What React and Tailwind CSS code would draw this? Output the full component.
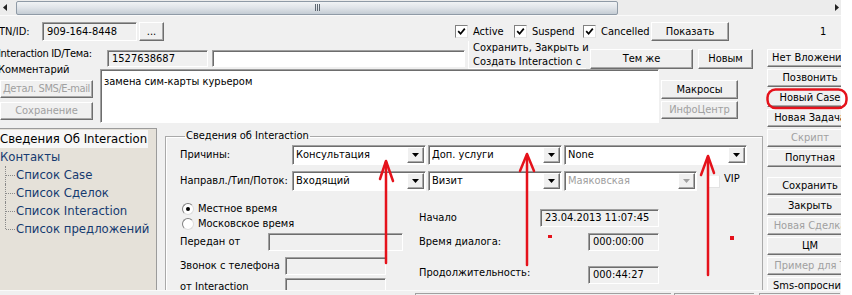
import React from "react";

const btn =
  "flex items-center justify-center bg-[#f0f0f0] border border-t-white border-l-white border-r-[#6e6e6e] border-b-[#6e6e6e] shadow-[inset_-1px_-1px_0_#a9a9a9] whitespace-nowrap overflow-hidden shrink-0";
const sunken =
  "border border-t-[#a0a0a0] border-l-[#a0a0a0] border-r-white border-b-white shadow-[inset_1px_1px_0_#6d6d6d]";

const Tick = () => (
  <svg width="9" height="9" viewBox="0 0 9 9">
    <path d="M1.2 4.2 L3.6 6.8 L7.8 1.6" stroke="#000" strokeWidth="1.7" fill="none" />
  </svg>
);

const CheckItem = ({ label, className }) => (
  <div className={`flex items-center ${className}`}>
    <span className="w-[13px] h-[13px] bg-white border border-t-[#808080] border-l-[#808080] border-r-[#e3e3e3] border-b-[#e3e3e3] flex items-center justify-center">
      <Tick />
    </span>
    <span className="ml-[5px]">{label}</span>
  </div>
);

const Arrow = ({ disabled }) => (
  <svg width="7" height="4" viewBox="0 0 7 4">
    <polygon points="0,0 7,0 3.5,4" fill={disabled ? "#a0a0a0" : "#000"} />
  </svg>
);

const Combo = ({ text, className, disabled }) => (
  <div className={`${sunken} bg-white h-[20px] flex items-stretch ${className}`}>
    <div className={`flex-1 flex items-center pl-[3px] whitespace-nowrap overflow-hidden ${disabled ? "text-[#a0a0a0]" : ""}`}>
      {text}
    </div>
    <div className={`${btn} w-[17px] my-[1px] mr-[1px]`}>
      <Arrow disabled={disabled} />
    </div>
  </div>
);

const Radio = ({ checked, label }) => (
  <div className="h-[15px] flex items-center">
    <span className="ml-[2px] w-[12px] h-[12px] rounded-full bg-white border border-t-[#808080] border-l-[#808080] border-r-[#dcdcdc] border-b-[#dcdcdc] flex items-center justify-center">
      {checked && <span className="w-[4px] h-[4px] rounded-full bg-black" />}
    </span>
    <span className="ml-[4px]">{label}</span>
  </div>
);

const TreeChild = ({ text, last }) => (
  <div className="h-[18px] flex items-center">
    <div className="w-[5px]" />
    <div className={`w-[10px] self-start border-l border-dotted border-[#8a8a8a] ${last ? "h-[9px]" : "h-[18px]"}`}>
      <div className="mt-[9px] border-t border-dotted border-[#8a8a8a]" />
    </div>
    <span className="ml-[1px] whitespace-nowrap">{text}</span>
  </div>
);

export default function App() {
  return (
    <div className="relative w-[852px] h-[295px] overflow-hidden bg-white text-[11px] leading-[14px] text-black font-['DejaVu_Sans_Condensed','DejaVu_Sans',sans-serif]">
      <div className="flex h-full">
        <div className="w-[841px] h-full flex flex-col bg-[#f0f0f0]">
          {/* horizontal scrollbar */}
          <div className="h-[16px] shrink-0 flex items-center bg-[#ececec] border-b border-[#fafafa]">
            <div className="w-[16px] h-full flex items-center pl-[3px]">
              <svg width="4" height="7" viewBox="0 0 4 7">
                <polygon points="4,0 4,7 0,3.5" fill="#222" />
              </svg>
            </div>
            <div className="w-[602px] h-[14px] rounded-[2px] border border-[#8f9aa6] bg-linear-to-b from-[#f1f3f5] via-[#dfe3e8] to-[#c4ccd4] flex items-center justify-center gap-[1px]">
              <span className="w-[1px] h-[7px] bg-[#5d6670]" />
              <span className="w-[1px] h-[7px] bg-[#5d6670]" />
              <span className="w-[1px] h-[7px] bg-[#5d6670]" />
            </div>
            <div className="flex-1" />
            <div className="w-[6px] flex items-center">
              <svg width="4" height="7" viewBox="0 0 4 7">
                <polygon points="0,0 0,7 4,3.5" fill="#222" />
              </svg>
            </div>
          </div>

          <div className="flex h-[274px] shrink-0">
            {/* main form */}
            <div className="w-[765px] flex flex-col">
              <div className="mt-[6px] h-[19px] shrink-0 flex items-center">
                <span className="-ml-[1px] w-[43px]">TN/ID:</span>
                <div className={`${sunken} bg-[#f0f0f0] w-[95px] h-[19px] flex items-center pl-[4px]`}>909-164-8448</div>
                <div className={`${btn} ml-[2px] w-[25px] h-[19px]`}>...</div>
                <div className="ml-[291px] flex items-center">
                  <CheckItem label="Active" className="w-[59px]" />
                  <CheckItem label="Suspend" className="w-[69px]" />
                  <CheckItem label="Cancelled" className="w-[68px]" />
                </div>
                <div className={`${btn} w-[78px] h-[19px]`}>Показать</div>
              </div>

              <div className="flex h-[83px] shrink-0">
                <div className="w-[100px] flex flex-col">
                  <span className="-ml-[2px] mt-[6px] h-[14px] whitespace-nowrap tracking-[-0.3px]">Interaction ID/Тема:</span>
                  <span className="-ml-[2px] mt-[2px] h-[14px]">Комментарий</span>
                  <div className={`${btn} mt-[3px] w-[93px] h-[18px] text-[#a0a0a0] tracking-[-0.4px]`}>Детал. SMS/E-mail</div>
                  <div className={`${btn} mt-[4px] w-[93px] h-[18px] text-[#a0a0a0]`}>Сохранение</div>
                </div>
                <div className="w-[665px] flex flex-col">
                  <div className="h-[28px] shrink-0 flex items-start">
                    <div className={`${sunken} bg-[#f0f0f0] ml-[7px] mt-[9px] w-[101px] h-[17px] flex items-center pl-[4px]`}>1527638687</div>
                    <div className={`${sunken} bg-white ml-[4px] mt-[9px] w-[253px] h-[17px]`} />
                    <div className="ml-[3px] w-[118px] h-[28px] pl-[4px] border-l border-b border-white whitespace-nowrap">
                      <div>Сохранить, Закрыть и</div>
                      <div>Создать Interaction с</div>
                    </div>
                    <div className={`${btn} ml-[4px] mt-[8px] w-[103px] h-[20px]`}>Тем же</div>
                    <div className={`${btn} ml-[5px] mt-[8px] w-[55px] h-[20px]`}>Новым</div>
                  </div>
                  <div className="flex h-[55px] shrink-0">
                    <div className={`${sunken} bg-white w-[559px] h-[54px] pl-[3px] pt-[5px]`}>замена сим-карты курьером</div>
                    <div className="ml-[2px] flex flex-col">
                      <div className={`${btn} mt-[11px] w-[77px] h-[19px]`}>Макросы</div>
                      <div className={`${btn} mt-[2px] w-[77px] h-[18px] text-[#a0a0a0]`}>ИнфоЦентр</div>
                    </div>
                  </div>
                </div>
              </div>

              <div className="flex h-[166px] shrink-0">
                {/* tree */}
                <div className="mt-[4px] w-[157px] h-[162px] bg-[#e5e1d9] border-t border-r border-[#9b9b9b] text-[13px] leading-[18px] text-[#163a70] overflow-hidden">
                  <div className="mt-[1px] w-[148px] h-[18px] bg-[#f7f7f7] text-black whitespace-nowrap">Сведения Об Interaction</div>
                  <div className="h-[18px]">Контакты</div>
                  <TreeChild text="Список Case" />
                  <TreeChild text="Список Сделок" />
                  <TreeChild text="Список Interaction" />
                  <TreeChild text="Список предложений" last />
                </div>

                {/* group box */}
                <fieldset className="ml-[8px] mt-[5px] w-[598px] h-[175px] border border-[#a9a9a9] shadow-[inset_1px_1px_0_white] pl-[14px]">
                  <legend className="ml-[5px] px-[1px] leading-[14px]">Сведения об Interaction</legend>
                  <div className="mt-[2px] h-[20px] flex items-center">
                    <span className="w-[112px]">Причины:</span>
                    <Combo text="Консультация" className="w-[134px]" />
                    <Combo text="Доп. услуги" className="ml-[2px] w-[134px]" />
                    <Combo text="None" className="ml-[2px] w-[183px]" />
                  </div>
                  <div className="mt-[6px] h-[20px] flex items-center">
                    <span className="w-[112px] whitespace-nowrap">Направл./Тип/Поток:</span>
                    <Combo text="Входящий" className="w-[134px]" />
                    <Combo text="Визит" className="ml-[2px] w-[134px]" />
                    <Combo text="Маяковская" className="ml-[2px] w-[133px]" disabled />
                    <span className="ml-[11px] w-[12px] h-[13px] bg-white border border-t-[#f0f0f0] border-l-[#f0f0f0] border-r-[#e3e3e3] border-b-[#e3e3e3]" />
                    <span className="ml-[4px] mb-[4px]">VIP</span>
                  </div>
                  <div className="flex">
                    <div className="w-[239px] flex flex-col">
                      <div className="mt-[10px]">
                        <Radio checked label="Местное время" />
                        <Radio label="Московское время" />
                      </div>
                      <div className="mt-[2px] h-[18px] flex items-center">
                        <span className="w-[88px]">Передан от</span>
                        <div className={`${sunken} bg-[#f0f0f0] w-[135px] h-[18px]`} />
                      </div>
                      <div className="mt-[6px] h-[18px] flex items-center">
                        <span className="w-[105px] whitespace-nowrap">Звонок с телефона</span>
                        <div className={`${sunken} bg-[#f0f0f0] w-[101px] h-[18px]`} />
                      </div>
                      <div className="mt-[3px] h-[18px] flex items-center">
                        <span className="w-[105px] whitespace-nowrap">от Interaction</span>
                        <div className={`${sunken} bg-[#f0f0f0] w-[101px] h-[18px]`} />
                      </div>
                    </div>
                    <div className="flex flex-col">
                      <div className="mt-[18px] h-[18px] flex items-center">
                        <span className="w-[121px]">Начало</span>
                        <div className={`${sunken} bg-[#f0f0f0] w-[119px] h-[18px] flex items-center pl-[4px]`}>23.04.2013 11:07:45</div>
                      </div>
                      <div className="mt-[6px] h-[18px] flex items-center">
                        <span className="w-[169px]">Время диалога:</span>
                        <div className={`${sunken} bg-[#f0f0f0] w-[71px] h-[18px] flex items-center pl-[4px]`}>000:00:00</div>
                      </div>
                      <div className="mt-[15px] h-[18px] flex items-start">
                        <span className="w-[169px]">Продолжительность:</span>
                        <div className={`${sunken} bg-[#f0f0f0] w-[71px] h-[18px] flex items-center pl-[4px]`}>000:44:27</div>
                      </div>
                    </div>
                  </div>
                </fieldset>
              </div>
            </div>

            {/* right button column */}
            <div className="w-[76px] overflow-hidden flex flex-col">
              <div className="mt-[6px] h-[19px] shrink-0 flex items-center pl-[55px]">1</div>
              <div className="mt-[8px] pl-[2px] shrink-0 flex flex-col gap-[2px]">
                <div className={`${btn} w-[86px] h-[18px]`}>Нет Вложений</div>
                <div className={`${btn} w-[86px] h-[18px]`}>Позвонить</div>
                <div className={`${btn} w-[86px] h-[18px]`}>Новый Case</div>
                <div className={`${btn} w-[86px] h-[18px]`}>Новая Задача</div>
                <div className={`${btn} w-[86px] h-[18px] text-[#a0a0a0]`}>Скрипт</div>
                <div className={`${btn} w-[86px] h-[18px]`}>Попутная</div>
              </div>
              <div className="mt-[10px] pl-[2px] shrink-0 flex flex-col gap-[2px]">
                <div className={`${btn} w-[86px] h-[18px]`}>Сохранить</div>
                <div className={`${btn} w-[86px] h-[18px]`}>Закрыть</div>
                <div className={`${btn} w-[86px] h-[18px] text-[#a0a0a0]`}>Новая Сделка</div>
                <div className={`${btn} w-[86px] h-[18px]`}>ЦМ</div>
                <div className={`${btn} w-[86px] h-[18px] text-[#a0a0a0]`}>Пример для Т</div>
                <div className={`${btn} w-[86px] h-[18px]`}>Sms-опросник</div>
              </div>
            </div>
          </div>

          {/* status bar */}
          <div className="flex-1 flex border-t border-[#fafafa] bg-[#f0f0f0]">
            <div className="ml-[415px] mt-[2px] w-[256px] border-t border-l border-[#a0a0a0]" />
            <div className="ml-[3px] mt-[2px] w-[80px] border-t border-l border-[#a0a0a0]" />
            <div className="ml-[5px] mt-[2px] w-[81px] border-t border-l border-[#a0a0a0]" />
          </div>
        </div>
        <div className="flex-1 bg-white" />
      </div>

      {/* red annotations drawn over the screenshot */}
      <svg className="absolute inset-0 pointer-events-none" width="852" height="295" viewBox="0 0 852 295">
        <g stroke="#e5121b" strokeWidth="2.5" fill="none" strokeLinecap="round" strokeLinejoin="round">
          <line x1="386" y1="263" x2="386" y2="162" />
          <polyline points="380,179 386,161 393,181" />
          <line x1="527" y1="265" x2="527" y2="155" />
          <polyline points="520,171 527,154 534,171" />
          <line x1="708" y1="275" x2="708" y2="157" />
          <polyline points="701,175 708,156 714,173" />
          <rect x="767.5" y="89.5" width="79" height="18.5" rx="8" />
        </g>
        <rect x="548" y="235" width="4" height="3" fill="#e5121b" />
        <rect x="730" y="236" width="4" height="4" fill="#e5121b" />
      </svg>
    </div>
  );
}
